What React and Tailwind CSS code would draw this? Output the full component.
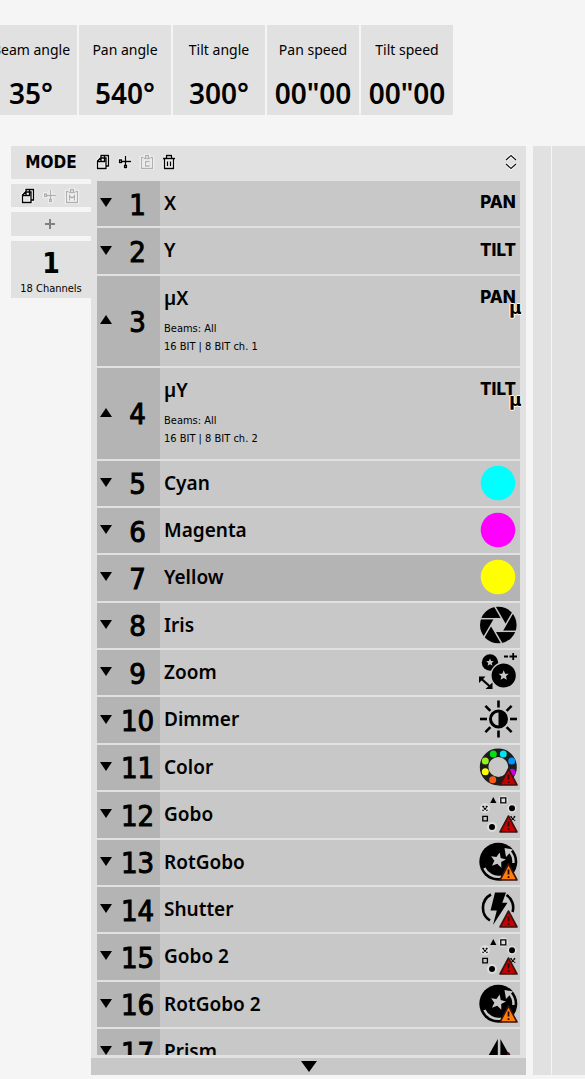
import React, { useState } from "react";

const stats = [
  { label: "Beam angle", value: "35°" },
  { label: "Pan angle", value: "540°" },
  { label: "Tilt angle", value: "300°" },
  { label: "Pan speed", value: '00"00' },
  { label: "Tilt speed", value: '00"00' },
];

const initialChannels = [
  { id: 1, name: "X", icon: "pan" },
  { id: 2, name: "Y", icon: "tilt" },
  { id: 3, name: "µX", icon: "pan", micro: true, open: true, bits: "16 BIT | 8 BIT ch. 1" },
  { id: 4, name: "µY", icon: "tilt", micro: true, open: true, bits: "16 BIT | 8 BIT ch. 2" },
  { id: 5, name: "Cyan", icon: "cyan" },
  { id: 6, name: "Magenta", icon: "magenta" },
  { id: 7, name: "Yellow", icon: "yellow" },
  { id: 8, name: "Iris", icon: "iris" },
  { id: 9, name: "Zoom", icon: "zoom" },
  { id: 10, name: "Dimmer", icon: "dimmer" },
  { id: 11, name: "Color", icon: "color" },
  { id: 12, name: "Gobo", icon: "gobo" },
  { id: 13, name: "RotGobo", icon: "rotgobo" },
  { id: 14, name: "Shutter", icon: "shutter" },
  { id: 15, name: "Gobo 2", icon: "gobo" },
  { id: 16, name: "RotGobo 2", icon: "rotgobo" },
  { id: 17, name: "Prism", icon: "prism" },
];

const STAR = "M0,-8 L2.2,-2.8 L7.6,-2.5 L3.5,1.1 L4.8,6.5 L0,3.6 L-4.8,6.5 L-3.5,1.1 L-7.6,-2.5 L-2.2,-2.8 Z";

const Warning = ({ color }) => (
  <g>
    <path d="M30.5 22 L39 38 H22 Z" fill={color} stroke="#3a1410" strokeWidth="1.6" strokeLinejoin="round" />
    <path d="M30.5 27.5 V32.5 M30.5 34.2 V36" stroke="#2a0808" strokeWidth="1.8" />
  </g>
);

// 40x40 drawings on the right side of the channel rows
const drawings = {
  cyan: <circle cx="20" cy="20" r="17.3" fill="#00ffff" />,
  magenta: <circle cx="20" cy="20" r="17.3" fill="#ff00ff" />,
  yellow: <circle cx="20" cy="20" r="17.3" fill="#ffff00" />,
  iris: (
    <g transform="translate(20.3 20)">
      <circle r="18.3" />
      <path d="M-3.65,-6.3 H3.65 L7.3,0 L3.65,6.3 H-3.65 L-7.3,0 Z" fill="#c8c8c8" />
      {[0, 60, 120, 180, 240, 300].map((a) => (
        <path key={a} d="M3.65,-6.3 H-18" stroke="#c8c8c8" strokeWidth="1.5" transform={`rotate(${a})`} />
      ))}
    </g>
  ),
  zoom: (
    <g>
      <circle cx="12" cy="10.5" r="8.2" />
      <path d={STAR} transform="translate(12 10.5) scale(.5)" fill="#c8c8c8" />
      <circle cx="25.7" cy="23.5" r="12.8" stroke="#c8c8c8" strokeWidth="1.4" />
      <path d={STAR} transform="translate(25.7 23.5) scale(.66)" fill="#c8c8c8" />
      <path d="M26 4.5 H30 M31.5 4.5 H39 M35.2 1 V8" stroke="#000" strokeWidth="1.8" />
      <path d="M3 26.5 L12.5 35" stroke="#000" strokeWidth="2.2" />
      <path d="M1 24.5 H7.5 L1 31 Z M14.5 37 H7.5 L14.5 30.5 Z" />
    </g>
  ),
  dimmer: (
    <g transform="translate(20.5 20)">
      <circle r="8" fill="#c8c8c8" stroke="#000" strokeWidth="3" />
      <path d="M0,-7.5 A7.5,7.5 0 0 1 0,7.5 Z" />
      {[0, 45, 90, 135, 180, 225, 270, 315].map((a) => (
        <path key={a} d="M0,-11.5 V-18.5" stroke="#000" strokeWidth="2.6" transform={`rotate(${a})`} />
      ))}
    </g>
  ),
  color: (
    <g>
      <circle cx="20.3" cy="20" r="14.2" fill="none" stroke="#1c1c1c" strokeWidth="8.6" />
      <circle cx="15.3" cy="7" r="3.5" fill="#00e010" />
      <circle cx="25.3" cy="7" r="3.5" fill="#00e4f0" />
      <circle cx="33.7" cy="14" r="3.5" fill="#0096ff" />
      <circle cx="34" cy="25.3" r="3.5" fill="#c800e0" />
      <circle cx="7.3" cy="14" r="3.5" fill="#96f01e" />
      <circle cx="7.3" cy="24.7" r="3.5" fill="#faff00" />
      <circle cx="14.7" cy="32.7" r="3.5" fill="#ff5a14" />
      <Warning color="#c40000" />
    </g>
  ),
  gobo: (
    <g>
      <g fill="#dedede">
        <circle cx="7" cy="14.3" r="5" />
        <circle cx="25.3" cy="6.3" r="5" />
        <circle cx="14" cy="33" r="5" />
        <circle cx="34" cy="14.3" r="4.6" />
      </g>
      <path d="M15.3 3 L18.4 9 H12.2 Z" />
      <path d="M22.8 3.8 H27.8 V8.8 H22.8 Z M4.8 22.3 H9.4 V26.9 H4.8 Z" fill="none" stroke="#000" strokeWidth="1.3" />
      <circle cx="34" cy="14.3" r="3" />
      <circle cx="14" cy="33" r="3" />
      <path
        d="M4.6 12 L9.4 16.8 M9.4 12 L4.6 16.8 M32.5 22.3 L37 26.8 M37 22.3 L32.5 26.8"
        stroke="#000"
        strokeWidth="1.6"
        strokeDasharray="2 .8"
      />
      <Warning color="#c40000" />
    </g>
  ),
  rotgobo: (
    <g>
      <circle cx="20.3" cy="19.7" r="19" />
      <path d={STAR} transform="translate(20 18.3) rotate(12)" fill="#c8c8c8" />
      <path
        d="M31.5 9.5 A15.2 15.2 0 0 1 35.4 21 M23 34.6 A15.2 15.2 0 0 1 6.4 26"
        fill="none"
        stroke="#c8c8c8"
        strokeWidth="2.4"
      />
      <path d="M26.5 6 L35 7.5 L28 15 Z" fill="#c8c8c8" />
      <Warning color="#ff7d0a" />
    </g>
  ),
  shutter: (
    <g>
      <path
        d="M13 5.5 A15 15 0 0 0 12 31.5 M28.5 6 A15 15 0 0 1 34.5 23"
        fill="none"
        stroke="#000"
        strokeWidth="2.6"
      />
      <path d="M17 3.5 H28 L24.3 13.7 H29.5 L15 36 L18.8 21.6 H12.5 Z" />
      <Warning color="#c40000" />
    </g>
  ),
  prism: (
    <g>
      <path d="M19.8 8 V36 H4 Z M22.4 8 V36 H38 Z" />
      <Warning color="#ff7d0a" />
    </g>
  ),
};

const ChannelIcon = ({ icon, micro }) => {
  if (icon === "pan" || icon === "tilt") {
    return (
      <div className="relative flex h-[44px] w-10 shrink-0 items-center justify-center font-['Inter'] text-[17px] font-extrabold">
        {icon.toUpperCase()}
        {micro && (
          <span className="absolute -right-[3px] top-[22px] text-[18px] leading-5 [text-shadow:1px_0_#fff,-1px_0_#fff,0_1px_#fff,0_-1px_#fff]">
            µ
          </span>
        )}
      </div>
    );
  }
  return (
    <svg viewBox="0 0 40 40" className="mt-[2px] size-10 shrink-0">
      {drawings[icon]}
    </svg>
  );
};

const toolPaths = {
  copy: "M6 4.5 V1.5 H13.5 V12 H11 M5.5 4 H11 V14.5 H2.5 V7 Z M6 4 V7.5 H2.5 M9.5 1.5 V7.5 H6",
  cut: "M5 7.5 H14 M8.5 2 V11.5 M2.5 6 H4.5 V8.5 H2.5 Z M7.5 11.5 H9.5 V13.5 H7.5 Z",
  pasteC: "M4.5 3.5 H2.5 V14.5 H13.5 V3.5 H11.5 M5 4.5 H11 M6.5 4 V1.5 H9.5 V4 M10.5 7.5 H6.5 V12 H10.5",
  pasteM: "M4.5 3.5 H2.5 V14.5 H13.5 V3.5 H11.5 M5 4.5 H11 M6.5 4 V1.5 H9.5 V4 M5.5 12.5 V7.5 L8 10 L10.5 7.5 V12.5",
  trash: "M2 4.5 H14 M5.5 4 V1.5 H10.5 V4 M3.5 5 V14.5 H12.5 V5 M6.5 7.5 V12 M9.5 7.5 V12",
};

const ToolButton = ({ icon, label, disabled }) => (
  <button type="button" aria-label={label} disabled={disabled} className="text-black disabled:text-[#b0b0b0]">
    <svg viewBox="0 0 16 16" className="size-4" fill="none">
      <path d={toolPaths[icon]} stroke="#f8f8f8" strokeWidth="3.4" strokeLinejoin="round" />
      <path d={toolPaths[icon]} stroke="currentColor" strokeWidth="1.3" />
    </svg>
  </button>
);

const Channel = ({ channel, selected, onToggle }) => {
  const { id, name, icon, micro, open, bits } = channel;
  return (
    <div className={`flex h-full min-h-[45px] ${selected ? "bg-[#b4b4b4]" : "bg-[#c8c8c8]"}`}>
      <div className="flex w-[63px] shrink-0 items-center bg-[#b4b4b4]">
        <button
          type="button"
          aria-label={`Toggle ${name}`}
          aria-expanded={!!open}
          onClick={() => onToggle(id)}
          className="flex w-[18px] shrink-0 justify-center pb-[2px]"
        >
          <svg viewBox="0 0 12 9" className="h-[9px] w-3">
            <path d={open ? "M0 9 L6 0 L12 9 Z" : "M0 0 H12 L6 9 Z"} />
          </svg>
        </button>
        <span className="flex-1 pt-[2px] text-center text-[29px] leading-9 [-webkit-text-stroke:1px_#000]">{id}</span>
      </div>
      <div className="min-w-0 flex-1 pl-1">
        <h3 className="font-['Noto_Sans'] text-[19px] font-semibold leading-[44px]">{name}</h3>
        {open && (
          <div className="text-[11px] leading-[18px]">
            <p>Beams: All</p>
            <p>{bits}</p>
          </div>
        )}
      </div>
      <div className="pr-[2px]">
        <ChannelIcon icon={icon} micro={micro} />
      </div>
    </div>
  );
};

const App = () => {
  const [channels, setChannels] = useState(initialChannels);

  const toggle = (id) => {
    setChannels(channels.map((c) => (c.id === id ? { ...c, open: !c.open } : c)));
  };

  return (
    <div className="flex h-screen flex-col overflow-hidden bg-[#f5f5f5] pb-1 pt-[25px] font-['DejaVu_Sans_Condensed','Noto_Sans',sans-serif] text-black">
      {/* Fixture values */}
      <div className="-ml-[15px] flex shrink-0 gap-[2px] font-['Noto_Sans']">
        {stats.map((s) => (
          <div key={s.label} className="flex h-[90px] w-[92px] shrink-0 flex-col items-center bg-[#e1e1e1] pt-[15px]">
            <span className="whitespace-nowrap text-[14px] leading-5">{s.label}</span>
            <span className="mt-[13px] text-[28px] font-semibold leading-10">{s.value}</span>
          </div>
        ))}
      </div>

      <div className="mt-[31px] flex min-h-0 flex-1 pl-[11px]">
        {/* Modes */}
        <aside className="flex w-20 shrink-0 flex-col gap-[5px]">
          <h2 className="bg-[#e1e1e1] text-center text-[17px] font-bold leading-[33px]">MODE</h2>
          <div className="flex h-[23px] items-center justify-center gap-[6px] bg-[#e1e1e1] pr-[2px]">
            <ToolButton icon="copy" label="Copy mode" />
            <ToolButton icon="cut" label="Cut mode" disabled />
            <ToolButton icon="pasteM" label="Paste mode" disabled />
          </div>
          <button type="button" aria-label="Add mode" className="flex h-6 items-center justify-center bg-[#e1e1e1] pr-[2px]">
            <svg viewBox="0 0 10 10" className="size-[10px]">
              <path d="M5 0 V10 M0 5 H10" stroke="#808080" strokeWidth="2" />
            </svg>
          </button>
          <button type="button" className="h-[57px] bg-[#e1e1e1] pt-[6px] text-center">
            <span className="block text-[28px] font-bold leading-8">1</span>
            <span className="block text-[11px] leading-[18px]">18 Channels</span>
          </button>
        </aside>

        {/* Channels */}
        <main className="flex min-w-0 flex-1 flex-col bg-[#e1e1e1]">
          <div className="flex h-[35px] shrink-0 items-center gap-[6px] pb-[3px] pl-1 pr-2">
            <ToolButton icon="copy" label="Copy channel" />
            <ToolButton icon="cut" label="Cut channel" />
            <ToolButton icon="pasteC" label="Paste channel" disabled />
            <ToolButton icon="trash" label="Delete channel" />
            <button type="button" aria-label="Expand or collapse all" className="ml-auto">
              <svg viewBox="0 0 14 16" className="h-4 w-[14px]" fill="none">
                <path d="M2 6 L7 1.5 L12 6 M2 10 L7 14.5 L12 10" stroke="#fff" strokeWidth="3" />
                <path d="M2 6 L7 1.5 L12 6 M2 10 L7 14.5 L12 10" stroke="#111" strokeWidth="1.2" />
              </svg>
            </button>
          </div>
          <ul className="mx-[6px] flex min-h-0 flex-1 flex-col gap-[2px]">
            {channels.map((c, i) => (
              <li
                key={c.id}
                className={
                  i === channels.length - 1
                    ? "h-[26px] shrink-0 overflow-hidden"
                    : c.open
                      ? "shrink-0 grow basis-[90px]"
                      : "shrink-0 grow basis-[45px]"
                }
              >
                <Channel channel={c} selected={c.id === 7} onToggle={toggle} />
              </li>
            ))}
          </ul>
          <button type="button" aria-label="Scroll down" className="mt-[3px] flex h-[17px] shrink-0 items-center justify-center bg-[#c8c8c8]">
            <svg viewBox="0 0 16 11" className="h-[11px] w-4">
              <path d="M0 0 H16 L8 11 Z" />
            </svg>
          </button>
        </main>

        <div className="ml-[7px] w-[52px] shrink-0 bg-[#e1e1e1] pl-[18px]">
          <div className="h-full border-l border-[#f5f5f5]" />
        </div>
      </div>
    </div>
  );
};

export default App;
